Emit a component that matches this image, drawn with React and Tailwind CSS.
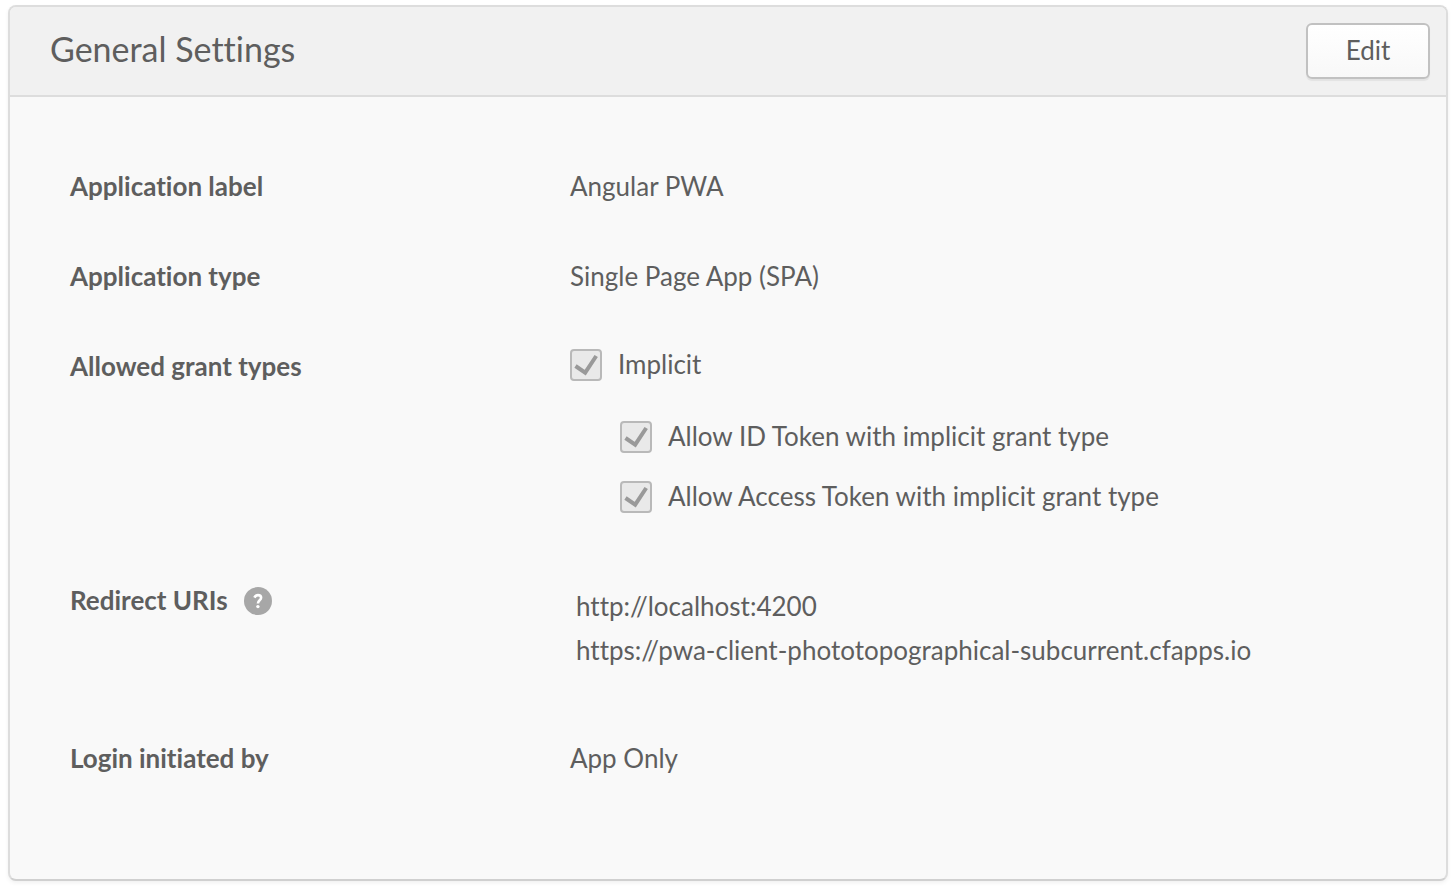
import React from "react";

function Row({ label, className = "", labelClassName = "", children }) {
  return (
    <div className={`flex items-start ${className}`}>
      <dt className={`flex w-[500px] shrink-0 items-end font-bold ${labelClassName}`}>{label}</dt>
      <dd className="min-w-0 flex-1">{children}</dd>
    </div>
  );
}

function Check({ id, label }) {
  return (
    <div className="flex items-start gap-4">
      <span className="grid size-8 shrink-0">
        <input
          id={id}
          type="checkbox"
          defaultChecked
          disabled
          className="col-start-1 row-start-1 size-8 appearance-none rounded border-2 border-[#b9b9b9] bg-[#e9e9e9]"
        />
        <svg viewBox="0 0 32 32" className="pointer-events-none col-start-1 row-start-1 size-8" aria-hidden="true">
          <path d="M5.5 17 L15.2 23.6 L26.2 7" fill="none" stroke="#999999" strokeWidth="4" />
        </svg>
      </span>
      <label htmlFor={id}>{label}</label>
    </div>
  );
}

export default function App() {
  return (
    <div className="min-h-screen bg-white px-2 pt-[5px] pb-2 font-['Lato',sans-serif] text-[26px] leading-[30px] text-[#5e5e5e] [font-variant-ligatures:none]">
      <section className="mr-[-2px] overflow-hidden rounded-lg border-2 border-[#dddddd] border-b-[#d0d0d0] bg-[#f9f9f9] shadow-[0_2px_4px_rgba(0,0,0,0.06)]">
        <header className="flex items-start justify-between border-b-2 border-[#dddddd] bg-[#f1f1f1] py-4 pr-4 pl-10">
          <h2 className="text-[34px] leading-[52px]">General Settings</h2>
          <button
            type="button"
            className="h-14 w-[124px] rounded-md border-2 border-[#c1c1c1] bg-linear-to-b from-white to-[#f8f8f8] pb-0.5 shadow-[0_2px_1px_rgba(0,0,0,0.06)]"
          >
            Edit
          </button>
        </header>
        <dl className="px-[60px] pt-[74px] pb-[106px]">
          <Row label="Application label">Angular PWA</Row>
          <Row label="Application type" className="mt-[60px]">Single Page App (SPA)</Row>
          <Row label="Allowed grant types" className="mt-[58px]" labelClassName="pt-0.5">
            <Check id="implicit" label="Implicit" />
            <div className="mt-10 flex flex-col gap-7 pl-[50px]">
              <Check id="id-token" label="Allow ID Token with implicit grant type" />
              <Check id="access-token" label="Allow Access Token with implicit grant type" />
            </div>
          </Row>
          <Row
            className="mt-[72px]"
            label={
              <>
                Redirect URIs
                <svg viewBox="0 0 28 28" className="ml-4 size-7" aria-hidden="true">
                  <circle cx="14" cy="14" r="14" fill="#a7a7a7" />
                  <path d="M10.4 10.6 C11.2 8.8 12.4 8.1 13.9 8.1 C15.9 8.1 17.1 9.1 17.1 10.7 C17.1 13.2 13.9 13.2 13.9 16.4" fill="none" stroke="#fff" strokeWidth="2.6" />
                  <circle cx="13.9" cy="19.6" r="1.7" fill="#fff" />
                </svg>
              </>
            }
          >
            <ul className="flex flex-col gap-0.5 pl-1.5 leading-[42px]">
              <li>http://localhost:4200</li>
              <li>https://pwa-client-phototopographical-subcurrent.cfapps.io</li>
            </ul>
          </Row>
          <Row label="Login initiated by" className="mt-[72px]">App Only</Row>
        </dl>
      </section>
    </div>
  );
}
